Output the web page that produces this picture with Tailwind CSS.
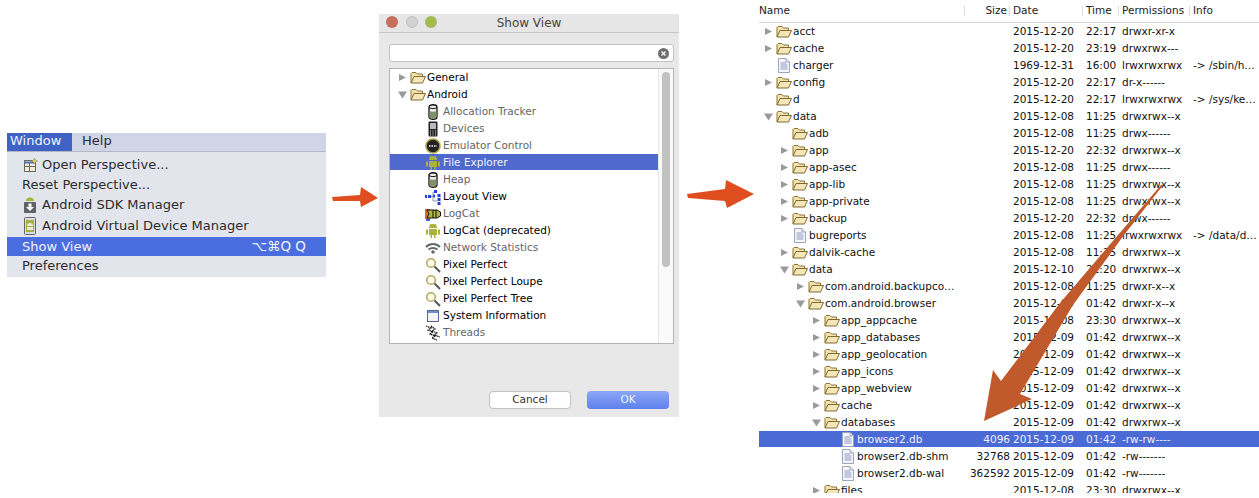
<!DOCTYPE html>
<html>
<head>
<meta charset="utf-8">
<script src="https://cdn.jsdelivr.net/npm/@tailwindcss/browser@4"></script>
</head>
<body class="bg-white">
<svg class="absolute w-0 h-0">
  <defs>
    <symbol id="folder" viewBox="0 0 16 13">
      <path d="M1 12V2.500L2 1.500H6L7.500 3H12.500V5.500" fill="#f3e2ae" stroke="#8a7438"/>
      <path d="M1 12L4 5.500H15.500L12.500 12Z" fill="#f5e6b8" stroke="#806a30"/>
    </symbol>
    <symbol id="file" viewBox="0 0 12 15">
      <path d="M.5.500H8L11.500 4V14.500H.5Z" fill="#f4f5fa" stroke="#a0a6c0"/>
      <path d="M8 .5V4H11.500" fill="#dfe2ee" stroke="#a0a6c0"/>
      <path d="M2.500 5H8M2.500 7H9.500M2.500 9H9.500M2.500 11H9.500" stroke="#8f9ac4"/>
    </symbol>
    <symbol id="right" viewBox="0 0 8 10"><path d="M0 1L8 5L0 9Z" fill="#9a9a9a"/></symbol>
    <symbol id="down" viewBox="0 0 10 8"><path d="M0 0H10L5 8Z" fill="#9a9a9a"/></symbol>
    <symbol id="droid" viewBox="0 0 16 16">
      <path d="M4 5a4 4 0 0 1 8 0Z" fill="#a9b23e"/>
      <path d="M4 6H12V12H10.500V15H9V12H7V15H5.500V12H4Z" fill="#a9b23e"/>
      <path d="M1 6.500H3V11.500H1ZM13 6.500H15V11.500H13Z" fill="#a9b23e"/>
      <path d="M5 1L6 2.500M11 1L10 2.500" stroke="#a9b23e"/>
    </symbol>
    <symbol id="db" viewBox="0 0 16 16">
      <path d="M4 3c0-3 8-3 8 0V13c0 3-8 3-8 0Z" fill="#eee" stroke="#111" stroke-width="1.300"/>
      <path d="M4.500 7c2 1 5 1 7 0V13c-1 2-6 2-7 0Z" fill="#7f9468"/>
      <path d="M4 3.500c2 1.500 6 1.500 8 0" fill="none" stroke="#111"/>
    </symbol>
    <symbol id="phone" viewBox="0 0 16 16">
      <rect x="3.500" y=".5" width="9" height="15" rx="1" fill="#222"/>
      <rect x="5" y="2" width="6" height="6" fill="#b8b8c0"/>
      <path d="M5 10H6M7.500 10H8.500M10 10H11M5 12H6M7.500 12H8.500M10 12H11M5 14H6M7.500 14H8.500M10 14H11" stroke="#ddd"/>
    </symbol>
    <symbol id="emu" viewBox="0 0 16 16">
      <circle cx="8" cy="8" r="7" fill="#222" stroke="#a9a540" stroke-width="1.600"/>
      <path d="M4 8H12" stroke="#fff" stroke-width="1.500" stroke-dasharray="1.500 1"/>
    </symbol>
    <symbol id="tree" viewBox="0 0 16 16">
      <path d="M0 6H2V9H0ZM3 6H6V9H3ZM9 1H12V4H9ZM12.500 5H15.500V8H12.500ZM12.500 9H15.500V12H12.500ZM12.500 13H15.500V16H12.500ZM8 5.500H10V8.500H8Z" fill="#1c3fe0"/>
      <path d="M6 7.500H8M8 3V12H12" stroke="#8a96b0" fill="none"/>
    </symbol>
    <symbol id="logcat" viewBox="0 0 16 16">
      <path d="M0 3H5V13H0Z" fill="#e06a20"/>
      <path d="M1 13H5V15H1Z" fill="#3a5fe0"/>
      <path d="M2 4H12L15.500 6V10L12 12H2L4 8Z" fill="#b3b33d" stroke="#111"/>
      <path d="M8 4V12M11 4V12" stroke="#111"/>
    </symbol>
    <symbol id="wifi" viewBox="0 0 16 16">
      <path d="M1 7C5 3 11 3 15 7M3.500 9.500C6 7.500 10 7.500 12.500 9.500" fill="none" stroke="#666" stroke-width="2"/>
      <circle cx="8" cy="12" r="1.800" fill="#666"/>
    </symbol>
    <symbol id="loupe" viewBox="0 0 16 16">
      <circle cx="6" cy="6" r="4.300" fill="#fbfbf0" stroke="#b3ad5c" stroke-width="1.600"/>
      <path d="M9.500 9.500L15 15" stroke="#555" stroke-width="2"/>
    </symbol>
    <symbol id="win" viewBox="0 0 16 16">
      <rect x="2.500" y="2.500" width="11" height="11" fill="#f4f6fb" stroke="#57688f"/>
      <path d="M3 4H13" stroke="#6f8fd0" stroke-width="2"/>
    </symbol>
    <symbol id="threads" viewBox="0 0 16 16">
      <path d="M1 1L6 3L3 5L8 7L5 9L10 11L7 13L12 15M6 1L10 4L7 6L12 8L9 10L15 12" fill="none" stroke="#111" stroke-width="1.200" stroke-dasharray="1.500 .6"/>
    </symbol>
  </defs>
</svg>

<div class="relative flex items-start w-[1259px] h-[498px] overflow-hidden font-['DejaVu_Sans',sans-serif] text-black">

  <!-- Menu -->
  <div class="ml-[7px] mt-[133px] w-[319px] h-[144px] bg-[#e3e5ed] text-[13px] text-[#2c2c2c]">
    <div class="flex items-center h-[19px] pb-[2px] bg-[#cfd5e6] border-b border-[#b4b8c4]">
      <span class="flex items-center w-[65px] h-[18px] -mb-[2px] pb-[2px] pl-[3px] bg-[#3e63c4] text-[#f1f3fb]">Window</span>
      <span class="ml-[10px]">Help</span>
    </div>
    <div class="flex items-center h-[20px] mt-[3px] pl-[17px] gap-[4px]">
      <svg class="w-[14px] h-[15px]" viewBox="0 0 14 15"><rect x=".5" y="2.500" width="11" height="11" fill="#f0ead8" stroke="#6a6a60"/><path d="M.5 4.500H11" stroke="#4a6cc0" stroke-width="2"/><path d="M.5 8.500H11.500M5.500 4V13.500" stroke="#6a6a60"/><path d="M10.500 0L11.500 2L13.500 3L11.500 4L10.500 6L9.500 4L7.500 3L9.500 2Z" fill="#e8d873" stroke="#8a7a30" stroke-width=".5"/></svg>
      <span>Open Perspective...</span>
    </div>
    <div class="flex items-center h-[20px] pl-[15px]">Reset Perspective...</div>
    <div class="flex items-center h-[20px] pl-[17px] gap-[6px]">
      <svg class="w-[12px] h-[16px]" viewBox="0 0 12 16"><path d="M2 4a4 3.500 0 0 1 8 0Z" fill="#a9b23e"/><rect x="0" y="5" width="12" height="11" rx="1" fill="#5f6368"/><path d="M4.500 6.500H7.500V10H10L6 14L2 10H4.500Z" fill="#fff"/></svg>
      <span>Android SDK Manager</span>
    </div>
    <div class="flex items-center h-[22px] pl-[17px] gap-[6px]">
      <svg class="w-[12px] h-[18px]" viewBox="0 0 12 18"><rect x=".5" y=".5" width="11" height="17" rx="1" fill="#d8dce0" stroke="#666"/><rect x="2" y="3" width="8" height="12" fill="#a9b23e"/><path d="M3 9a3 3 0 0 1 6 0Z" fill="#e8ead0"/><rect x="3" y="10" width="6" height="3" fill="#e8ead0"/></svg>
      <span>Android Virtual Device Manager</span>
    </div>
    <div class="flex items-center justify-between h-[19px] pl-[15px] pr-[20px] bg-[#4a6ddf] text-[#f0f3fc]">
      <span>Show View</span><span class="text-[13.500px]">⌥⌘Q Q</span>
    </div>
    <div class="flex items-center h-[19px] pl-[15px]">Preferences</div>
  </div>

  <!-- Dialog -->
  <div class="ml-[53px] mt-[14px] w-[300px] h-[403px] bg-[#e8e8e8] text-[10.500px]">
    <div class="relative flex items-center justify-center h-[19px] bg-[#e6e6e6] border-b border-[#c4c4c4] text-[12px] text-[#444]">
      <div class="absolute left-[7px] top-[2px] flex gap-[7.500px]">
        <span class="w-[12px] h-[12px] rounded-full bg-[#c4705a]"></span>
        <span class="w-[12px] h-[12px] rounded-full bg-[#d2d2d2] border border-[#c0c0c0]"></span>
        <span class="w-[12px] h-[12px] rounded-full bg-[#a3bb50]"></span>
      </div>
      Show View
    </div>
    <div class="flex items-center justify-end ml-[10px] mt-[11px] w-[285px] h-[18px] pr-[4px] bg-white border border-[#c2c2c2] rounded-[3px]">
      <svg class="w-[11px] h-[11px]" viewBox="0 0 11 11"><circle cx="5.500" cy="5.500" r="5.500" fill="#6e6e6e"/><path d="M3.500 3.500L7.500 7.500M7.500 3.500L3.500 7.500" stroke="#fff" stroke-width="1.300"/></svg>
    </div>
    <div class="flex ml-[10px] mt-[6px] w-[285px] h-[276px] bg-white border border-[#b4b4b4] overflow-hidden">
      <div class="w-[268px] shrink-0">
        <div class="flex items-center h-[17px] pl-[9px]"><svg class="w-[7px] h-[9px] mr-[4px]"><use href="#right"/></svg><svg class="w-[16px] h-[13px] mr-[1px]"><use href="#folder"/></svg>General</div>
        <div class="flex items-center h-[17px] pl-[8px]"><svg class="w-[9px] h-[8px] mr-[3px]"><use href="#down"/></svg><svg class="w-[16px] h-[13px] mr-[1px]"><use href="#folder"/></svg>Android</div>
        <div class="flex items-center h-[17px] pl-[35px] gap-[2px] text-[#666]"><svg class="w-[16px] h-[16px]"><use href="#db"/></svg>Allocation Tracker</div>
        <div class="flex items-center h-[17px] pl-[35px] gap-[2px] text-[#666]"><svg class="w-[16px] h-[16px]"><use href="#phone"/></svg>Devices</div>
        <div class="flex items-center h-[17px] pl-[35px] gap-[2px] text-[#666]"><svg class="w-[16px] h-[16px]"><use href="#emu"/></svg>Emulator Control</div>
        <div class="flex items-center h-[16px] mb-[1px] pt-[1px] pl-[35px] gap-[2px] bg-[#5069cf] text-[#eef0f8]"><svg class="w-[16px] h-[16px]"><use href="#droid"/></svg>File Explorer</div>
        <div class="flex items-center h-[17px] pl-[35px] gap-[2px] text-[#666]"><svg class="w-[16px] h-[16px]"><use href="#db"/></svg>Heap</div>
        <div class="flex items-center h-[17px] pl-[35px] gap-[2px]"><svg class="w-[16px] h-[16px]"><use href="#tree"/></svg>Layout View</div>
        <div class="flex items-center h-[17px] pl-[35px] gap-[2px] text-[#666]"><svg class="w-[16px] h-[16px]"><use href="#logcat"/></svg>LogCat</div>
        <div class="flex items-center h-[17px] pl-[35px] gap-[2px]"><svg class="w-[16px] h-[16px]"><use href="#droid"/></svg>LogCat (deprecated)</div>
        <div class="flex items-center h-[17px] pl-[35px] gap-[2px] text-[#666]"><svg class="w-[16px] h-[16px]"><use href="#wifi"/></svg>Network Statistics</div>
        <div class="flex items-center h-[17px] pl-[35px] gap-[2px]"><svg class="w-[16px] h-[16px]"><use href="#loupe"/></svg>Pixel Perfect</div>
        <div class="flex items-center h-[17px] pl-[35px] gap-[2px]"><svg class="w-[16px] h-[16px]"><use href="#loupe"/></svg>Pixel Perfect Loupe</div>
        <div class="flex items-center h-[17px] pl-[35px] gap-[2px]"><svg class="w-[16px] h-[16px]"><use href="#loupe"/></svg>Pixel Perfect Tree</div>
        <div class="flex items-center h-[17px] pl-[35px] gap-[2px]"><svg class="w-[16px] h-[16px]"><use href="#win"/></svg>System Information</div>
        <div class="flex items-center h-[17px] pl-[35px] gap-[2px] text-[#666]"><svg class="w-[16px] h-[16px]"><use href="#threads"/></svg>Threads</div>
        <div class="flex items-center h-[17px] pl-[35px] gap-[2px]"><svg class="w-[16px] h-[16px]"><use href="#tree"/></svg></div>
      </div>
      <div class="flex-1 border-l border-[#e6e6e6] bg-[#fafafa] pl-[3px] pt-[3px]">
        <div class="w-[8px] h-[195px] rounded-full bg-[#c2c2c2]"></div>
      </div>
    </div>
    <div class="flex justify-end gap-[16px] mt-[47px] pr-[10px]">
      <div class="flex items-center justify-center w-[82px] h-[18px] bg-white border border-[#c0c0c0] rounded-[4px] text-[#333]">Cancel</div>
      <div class="flex items-center justify-center w-[82px] h-[18px] rounded-[4px] bg-gradient-to-b from-[#8da6f6] to-[#5f80ec] text-[#eef2fd]">OK</div>
    </div>
  </div>

  <!-- Tree table -->
  <div class="ml-[80px] w-[500px] h-[493px] overflow-hidden shrink-0 text-[10.500px] text-[#111]">
    <div class="grid grid-cols-[206px_45px_73px_36px_71px_69px] h-[23px] border-b border-[#d6d6d6] items-center text-[#222]">
      <div class="border-r border-[#dcdcdc] h-[10px] flex items-center">Name</div>
      <div class="border-r border-[#dcdcdc] h-[10px] flex items-center justify-end pr-[2px]">Size</div>
      <div class="border-r border-[#dcdcdc] h-[10px] flex items-center pl-[3px]">Date</div>
      <div class="border-r border-[#dcdcdc] h-[10px] flex items-center pl-[3px]">Time</div>
      <div class="border-r border-[#dcdcdc] h-[10px] flex items-center pl-[3px]">Permissions</div>
      <div class="h-[10px] flex items-center pl-[3px]">Info</div>
    </div>
    <div class="grid grid-cols-[206px_45px_73px_36px_71px_69px] h-[17px] items-center"><div class="flex items-center pl-[6px]"><svg class="w-[7px] h-[9px] mr-[4px]"><use href="#right"/></svg><svg class="w-[16px] h-[13px] mr-[1px]"><use href="#folder"/></svg>acct</div><div></div><div class="pl-[3px]">2015-12-20</div><div class="pl-[3px]">22:17</div><div class="pl-[3px]">drwxr-xr-x</div><div></div></div>
    <div class="grid grid-cols-[206px_45px_73px_36px_71px_69px] h-[17px] items-center"><div class="flex items-center pl-[6px]"><svg class="w-[7px] h-[9px] mr-[4px]"><use href="#right"/></svg><svg class="w-[16px] h-[13px] mr-[1px]"><use href="#folder"/></svg>cache</div><div></div><div class="pl-[3px]">2015-12-20</div><div class="pl-[3px]">23:19</div><div class="pl-[3px]">drwxrwx---</div><div></div></div>
    <div class="grid grid-cols-[206px_45px_73px_36px_71px_69px] h-[17px] items-center"><div class="flex items-center pl-[19px]"><svg class="w-[12px] h-[15px] mr-[3px]"><use href="#file"/></svg>charger</div><div></div><div class="pl-[3px]">1969-12-31</div><div class="pl-[3px]">16:00</div><div class="pl-[3px]">lrwxrwxrwx</div><div class="pl-[3px]">-&gt; /sbin/h…</div></div>
    <div class="grid grid-cols-[206px_45px_73px_36px_71px_69px] h-[17px] items-center"><div class="flex items-center pl-[6px]"><svg class="w-[7px] h-[9px] mr-[4px]"><use href="#right"/></svg><svg class="w-[16px] h-[13px] mr-[1px]"><use href="#folder"/></svg>config</div><div></div><div class="pl-[3px]">2015-12-20</div><div class="pl-[3px]">22:17</div><div class="pl-[3px]">dr-x------</div><div></div></div>
    <div class="grid grid-cols-[206px_45px_73px_36px_71px_69px] h-[17px] items-center"><div class="flex items-center pl-[17px]"><svg class="w-[16px] h-[13px] mr-[1px]"><use href="#folder"/></svg>d</div><div></div><div class="pl-[3px]">2015-12-20</div><div class="pl-[3px]">22:17</div><div class="pl-[3px]">lrwxrwxrwx</div><div class="pl-[3px]">-&gt; /sys/ke…</div></div>
    <div class="grid grid-cols-[206px_45px_73px_36px_71px_69px] h-[17px] items-center"><div class="flex items-center pl-[5px]"><svg class="w-[9px] h-[8px] mr-[3px]"><use href="#down"/></svg><svg class="w-[16px] h-[13px] mr-[1px]"><use href="#folder"/></svg>data</div><div></div><div class="pl-[3px]">2015-12-08</div><div class="pl-[3px]">11:25</div><div class="pl-[3px]">drwxrwx--x</div><div></div></div>
    <div class="grid grid-cols-[206px_45px_73px_36px_71px_69px] h-[17px] items-center"><div class="flex items-center pl-[33px]"><svg class="w-[16px] h-[13px] mr-[1px]"><use href="#folder"/></svg>adb</div><div></div><div class="pl-[3px]">2015-12-08</div><div class="pl-[3px]">11:25</div><div class="pl-[3px]">drwx------</div><div></div></div>
    <div class="grid grid-cols-[206px_45px_73px_36px_71px_69px] h-[17px] items-center"><div class="flex items-center pl-[22px]"><svg class="w-[7px] h-[9px] mr-[4px]"><use href="#right"/></svg><svg class="w-[16px] h-[13px] mr-[1px]"><use href="#folder"/></svg>app</div><div></div><div class="pl-[3px]">2015-12-20</div><div class="pl-[3px]">22:32</div><div class="pl-[3px]">drwxrwx--x</div><div></div></div>
    <div class="grid grid-cols-[206px_45px_73px_36px_71px_69px] h-[17px] items-center"><div class="flex items-center pl-[22px]"><svg class="w-[7px] h-[9px] mr-[4px]"><use href="#right"/></svg><svg class="w-[16px] h-[13px] mr-[1px]"><use href="#folder"/></svg>app-asec</div><div></div><div class="pl-[3px]">2015-12-08</div><div class="pl-[3px]">11:25</div><div class="pl-[3px]">drwx------</div><div></div></div>
    <div class="grid grid-cols-[206px_45px_73px_36px_71px_69px] h-[17px] items-center"><div class="flex items-center pl-[22px]"><svg class="w-[7px] h-[9px] mr-[4px]"><use href="#right"/></svg><svg class="w-[16px] h-[13px] mr-[1px]"><use href="#folder"/></svg>app-lib</div><div></div><div class="pl-[3px]">2015-12-08</div><div class="pl-[3px]">11:25</div><div class="pl-[3px]">drwxrwx--x</div><div></div></div>
    <div class="grid grid-cols-[206px_45px_73px_36px_71px_69px] h-[17px] items-center"><div class="flex items-center pl-[22px]"><svg class="w-[7px] h-[9px] mr-[4px]"><use href="#right"/></svg><svg class="w-[16px] h-[13px] mr-[1px]"><use href="#folder"/></svg>app-private</div><div></div><div class="pl-[3px]">2015-12-08</div><div class="pl-[3px]">11:25</div><div class="pl-[3px]">drwxrwx--x</div><div></div></div>
    <div class="grid grid-cols-[206px_45px_73px_36px_71px_69px] h-[17px] items-center"><div class="flex items-center pl-[22px]"><svg class="w-[7px] h-[9px] mr-[4px]"><use href="#right"/></svg><svg class="w-[16px] h-[13px] mr-[1px]"><use href="#folder"/></svg>backup</div><div></div><div class="pl-[3px]">2015-12-20</div><div class="pl-[3px]">22:32</div><div class="pl-[3px]">drwx------</div><div></div></div>
    <div class="grid grid-cols-[206px_45px_73px_36px_71px_69px] h-[17px] items-center"><div class="flex items-center pl-[35px]"><svg class="w-[12px] h-[15px] mr-[3px]"><use href="#file"/></svg>bugreports</div><div></div><div class="pl-[3px]">2015-12-08</div><div class="pl-[3px]">11:25</div><div class="pl-[3px]">lrwxrwxrwx</div><div class="pl-[3px]">-&gt; /data/d…</div></div>
    <div class="grid grid-cols-[206px_45px_73px_36px_71px_69px] h-[17px] items-center"><div class="flex items-center pl-[22px]"><svg class="w-[7px] h-[9px] mr-[4px]"><use href="#right"/></svg><svg class="w-[16px] h-[13px] mr-[1px]"><use href="#folder"/></svg>dalvik-cache</div><div></div><div class="pl-[3px]">2015-12-08</div><div class="pl-[3px]">11:25</div><div class="pl-[3px]">drwxrwx--x</div><div></div></div>
    <div class="grid grid-cols-[206px_45px_73px_36px_71px_69px] h-[17px] items-center"><div class="flex items-center pl-[21px]"><svg class="w-[9px] h-[8px] mr-[3px]"><use href="#down"/></svg><svg class="w-[16px] h-[13px] mr-[1px]"><use href="#folder"/></svg>data</div><div></div><div class="pl-[3px]">2015-12-10</div><div class="pl-[3px]">22:20</div><div class="pl-[3px]">drwxrwx--x</div><div></div></div>
    <div class="grid grid-cols-[206px_45px_73px_36px_71px_69px] h-[17px] items-center"><div class="flex items-center pl-[38px]"><svg class="w-[7px] h-[9px] mr-[4px]"><use href="#right"/></svg><svg class="w-[16px] h-[13px] mr-[1px]"><use href="#folder"/></svg>com.android.backupco…</div><div></div><div class="pl-[3px]">2015-12-08</div><div class="pl-[3px]">11:25</div><div class="pl-[3px]">drwxr-x--x</div><div></div></div>
    <div class="grid grid-cols-[206px_45px_73px_36px_71px_69px] h-[17px] items-center"><div class="flex items-center pl-[37px]"><svg class="w-[9px] h-[8px] mr-[3px]"><use href="#down"/></svg><svg class="w-[16px] h-[13px] mr-[1px]"><use href="#folder"/></svg>com.android.browser</div><div></div><div class="pl-[3px]">2015-12-09</div><div class="pl-[3px]">01:42</div><div class="pl-[3px]">drwxr-x--x</div><div></div></div>
    <div class="grid grid-cols-[206px_45px_73px_36px_71px_69px] h-[17px] items-center"><div class="flex items-center pl-[54px]"><svg class="w-[7px] h-[9px] mr-[4px]"><use href="#right"/></svg><svg class="w-[16px] h-[13px] mr-[1px]"><use href="#folder"/></svg>app_appcache</div><div></div><div class="pl-[3px]">2015-12-08</div><div class="pl-[3px]">23:30</div><div class="pl-[3px]">drwxrwx--x</div><div></div></div>
    <div class="grid grid-cols-[206px_45px_73px_36px_71px_69px] h-[17px] items-center"><div class="flex items-center pl-[54px]"><svg class="w-[7px] h-[9px] mr-[4px]"><use href="#right"/></svg><svg class="w-[16px] h-[13px] mr-[1px]"><use href="#folder"/></svg>app_databases</div><div></div><div class="pl-[3px]">2015-12-09</div><div class="pl-[3px]">01:42</div><div class="pl-[3px]">drwxrwx--x</div><div></div></div>
    <div class="grid grid-cols-[206px_45px_73px_36px_71px_69px] h-[17px] items-center"><div class="flex items-center pl-[54px]"><svg class="w-[7px] h-[9px] mr-[4px]"><use href="#right"/></svg><svg class="w-[16px] h-[13px] mr-[1px]"><use href="#folder"/></svg>app_geolocation</div><div></div><div class="pl-[3px]">2015-12-09</div><div class="pl-[3px]">01:42</div><div class="pl-[3px]">drwxrwx--x</div><div></div></div>
    <div class="grid grid-cols-[206px_45px_73px_36px_71px_69px] h-[17px] items-center"><div class="flex items-center pl-[54px]"><svg class="w-[7px] h-[9px] mr-[4px]"><use href="#right"/></svg><svg class="w-[16px] h-[13px] mr-[1px]"><use href="#folder"/></svg>app_icons</div><div></div><div class="pl-[3px]">2015-12-09</div><div class="pl-[3px]">01:42</div><div class="pl-[3px]">drwxrwx--x</div><div></div></div>
    <div class="grid grid-cols-[206px_45px_73px_36px_71px_69px] h-[17px] items-center"><div class="flex items-center pl-[54px]"><svg class="w-[7px] h-[9px] mr-[4px]"><use href="#right"/></svg><svg class="w-[16px] h-[13px] mr-[1px]"><use href="#folder"/></svg>app_webview</div><div></div><div class="pl-[3px]">2015-12-09</div><div class="pl-[3px]">01:42</div><div class="pl-[3px]">drwxrwx--x</div><div></div></div>
    <div class="grid grid-cols-[206px_45px_73px_36px_71px_69px] h-[17px] items-center"><div class="flex items-center pl-[54px]"><svg class="w-[7px] h-[9px] mr-[4px]"><use href="#right"/></svg><svg class="w-[16px] h-[13px] mr-[1px]"><use href="#folder"/></svg>cache</div><div></div><div class="pl-[3px]">2015-12-09</div><div class="pl-[3px]">01:42</div><div class="pl-[3px]">drwxrwx--x</div><div></div></div>
    <div class="grid grid-cols-[206px_45px_73px_36px_71px_69px] h-[17px] items-center"><div class="flex items-center pl-[53px]"><svg class="w-[9px] h-[8px] mr-[3px]"><use href="#down"/></svg><svg class="w-[16px] h-[13px] mr-[1px]"><use href="#folder"/></svg>databases</div><div></div><div class="pl-[3px]">2015-12-09</div><div class="pl-[3px]">01:42</div><div class="pl-[3px]">drwxrwx--x</div><div></div></div>
    <div class="grid grid-cols-[206px_45px_73px_36px_71px_69px] h-[16px] mb-[1px] pt-[1px] items-center bg-[#4a6ad6] text-[#eef1fb]"><div class="flex items-center pl-[83px]"><svg class="w-[12px] h-[15px] mr-[3px]"><use href="#file"/></svg>browser2.db</div><div class="text-right">4096</div><div class="pl-[3px]">2015-12-09</div><div class="pl-[3px]">01:42</div><div class="pl-[3px]">-rw-rw----</div><div></div></div>
    <div class="grid grid-cols-[206px_45px_73px_36px_71px_69px] h-[17px] items-center"><div class="flex items-center pl-[83px]"><svg class="w-[12px] h-[15px] mr-[3px]"><use href="#file"/></svg>browser2.db-shm</div><div class="text-right">32768</div><div class="pl-[3px]">2015-12-09</div><div class="pl-[3px]">01:42</div><div class="pl-[3px]">-rw-------</div><div></div></div>
    <div class="grid grid-cols-[206px_45px_73px_36px_71px_69px] h-[17px] items-center"><div class="flex items-center pl-[83px]"><svg class="w-[12px] h-[15px] mr-[3px]"><use href="#file"/></svg>browser2.db-wal</div><div class="text-right">362592</div><div class="pl-[3px]">2015-12-09</div><div class="pl-[3px]">01:42</div><div class="pl-[3px]">-rw-------</div><div></div></div>
    <div class="grid grid-cols-[206px_45px_73px_36px_71px_69px] h-[17px] items-center"><div class="flex items-center pl-[54px]"><svg class="w-[7px] h-[9px] mr-[4px]"><use href="#right"/></svg><svg class="w-[16px] h-[13px] mr-[1px]"><use href="#folder"/></svg>files</div><div></div><div class="pl-[3px]">2015-12-08</div><div class="pl-[3px]">23:30</div><div class="pl-[3px]">drwxrwx--x</div><div></div></div>
  </div>

  <!-- Annotation arrows -->
  <svg class="absolute left-0 top-0 w-[1259px] h-[498px] pointer-events-none" viewBox="0 0 1259 498">
    <path d="M332 197L360 195L361 187L378 198L361 207L360 201L333 201Z" fill="#e04e20"/>
    <path d="M687 194L725 189L726 180L754 194L727 208L725 201L688 198Z" fill="#e04e20"/>
    <path d="M1164 184L1124 235L1073 305L1020 394L1032 399L984 421L993 370L1001 381L1060 303L1118 235L1161 185Z" fill="#c0592b"/>
  </svg>
</div>
</body>
</html>
